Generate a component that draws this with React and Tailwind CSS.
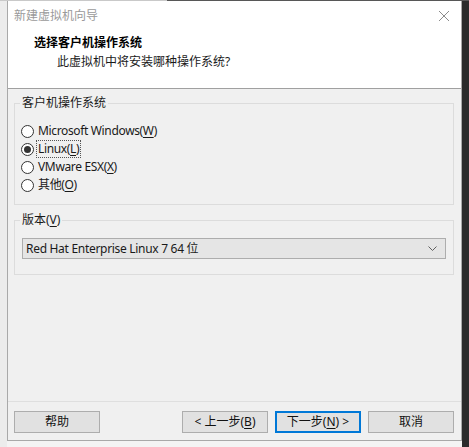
import React from "react";

const font = { fontFamily: '"Segoe UI", "Noto Sans", "Noto Sans CJK SC", sans-serif' };

function Radio({ checked, children, focus }) {
  return (
    <div className="flex h-[18px] items-center">
      <span className="flex h-[13px] w-[13px] items-center justify-center rounded-full border border-[#333333] bg-white">
        {checked && <span className="h-[7px] w-[7px] rounded-full bg-[#333333]" />}
      </span>
      <span
        className={
          "ml-[3px] px-[1px] leading-[16px] tracking-[-0.35px] " +
          (focus ? "outline outline-1 outline-dotted outline-[#555555]" : "")
        }
      >
        {children}
      </span>
    </div>
  );
}

function Btn({ children, primary }) {
  return (
    <button
      className={
        "flex h-[22px] w-[86px] items-center justify-center border bg-[#e1e1e1] text-[12px] text-[#111111] " +
        (primary ? "border-[#0078d7] shadow-[inset_0_0_0_1px_#0078d7]" : "border-[#adadad]")
      }
    >
      {children}
    </button>
  );
}

export default function App() {
  return (
    <div className="flex h-[447px] w-[469px] flex-col overflow-hidden text-[12px] text-[#1a1a1a]" style={font}>
      <div className="flex h-[1px]">
        <div className="w-[167px] bg-[#c9c9c9]" />
        <div className="flex-1 bg-[#575757]" />
      </div>
      <div className="flex flex-1">
        <div className="w-[7px] bg-[#ececec]" />
        <div className="flex w-[455px] flex-col bg-[#f7f7f7]">
          <div className="flex h-[440px] flex-col border-x border-b border-[#a9a9a9]">
            {/* title bar */}
            <div className="flex h-[30px] items-center justify-between bg-white pl-[6px] pr-[10px]">
              <span className="text-[12px] text-[#9a9a9a]">新建虚拟机向导</span>
              <svg width="12" height="12" viewBox="0 0 12 12" className="mr-[1px]">
                <path d="M1 1 L11 11 M11 1 L1 11" stroke="#8c8c8c" strokeWidth="1" fill="none" />
              </svg>
            </div>
            {/* header */}
            <div className="flex h-[58px] flex-col items-start border-b border-[#a0a0a0] bg-white">
              <div className="ml-[26px] mt-[4px] text-[12px] font-bold leading-[16px] text-black">选择客户机操作系统</div>
              <div className="ml-[49px] mt-[3px] text-[12px] leading-[16px] text-[#1a1a1a]">此虚拟机中将安装哪种操作系统?</div>
            </div>
            {/* body */}
            <div className="flex flex-1 flex-col bg-[#f0f0f0] pl-[6px] pr-[7px] pt-[6px]">
              <fieldset className="w-[440px] border border-[#dcdcdc] pb-[10px] pl-[6px] pt-[11px]">
                <legend className="-ml-[1px] px-[2px] leading-[16px]">客户机操作系统</legend>
                <Radio>
                  Microsoft Windows(<u className="underline-offset-2">W</u>)
                </Radio>
                <Radio checked focus>
                  Linux(<u className="underline-offset-2">L</u>)
                </Radio>
                <Radio>
                  VMware ESX(<u className="underline-offset-2">X</u>)
                </Radio>
                <Radio>
                  其他(<u className="underline-offset-2">O</u>)
                </Radio>
              </fieldset>
              <fieldset className="mt-[7px] w-[440px] border border-[#dcdcdc] pb-[15px] pl-[7px] pr-[7px] pt-[10px]">
                <legend className="-ml-[2px] px-[2px] leading-[16px]">
                  版本(<u className="underline-offset-2">V</u>)
                </legend>
                <div className="flex h-[21px] w-[424px] items-center justify-between border border-[#adadad] bg-[#e5e5e5] pl-[3px] pr-[8px]">
                  <span className="tracking-[-0.3px]">Red Hat Enterprise Linux 7 64 位</span>
                  <svg width="9" height="6" viewBox="0 0 9 6">
                    <path d="M0.5 0.5 L4.5 4.5 L8.5 0.5" stroke="#606060" strokeWidth="1" fill="none" />
                  </svg>
                </div>
              </fieldset>
            </div>
            {/* footer */}
            <div className="flex h-[39px] items-start border-t border-[#dfdfdf] bg-[#f0f0f0] pl-[6px] pt-[9px]">
              <Btn>帮助</Btn>
              <div className="ml-[82px] flex gap-[7px]">
                <Btn>
                  &lt; 上一步(<u className="underline-offset-2">B</u>)
                </Btn>
                <Btn primary>
                  下一步(<u className="underline-offset-2">N</u>) &gt;
                </Btn>
                <Btn>取消</Btn>
              </div>
            </div>
          </div>
          <div className="flex-1 bg-[#f4f4f4]" />
        </div>
        <div className="flex-1 bg-[#2b2b2b]" />
      </div>
    </div>
  );
}
